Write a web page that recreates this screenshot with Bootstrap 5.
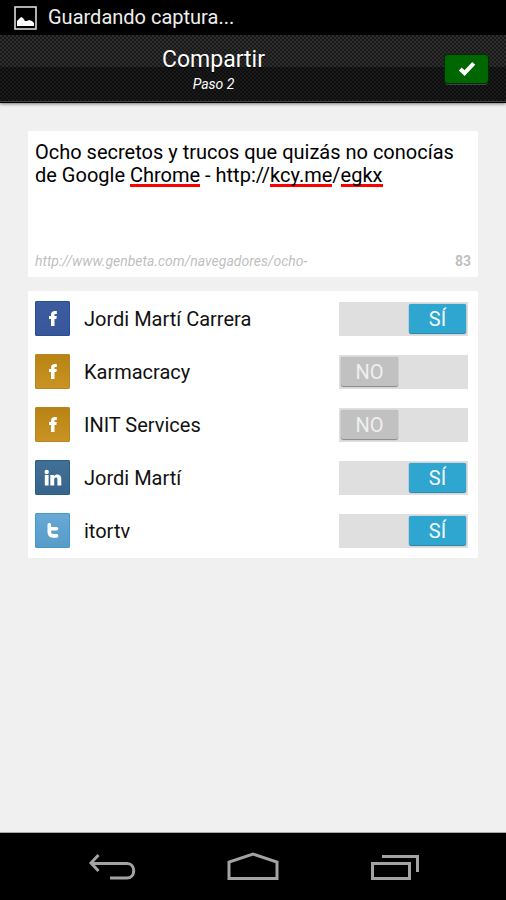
<!DOCTYPE html>
<html lang="es">
<head>
<meta charset="utf-8">
<meta name="viewport" content="width=device-width, initial-scale=1">
<title>Compartir</title>
<link href="https://cdn.jsdelivr.net/npm/bootstrap@5.3.0/dist/css/bootstrap.min.css" rel="stylesheet">
<style>
  body { font-family: Roboto, "Liberation Sans", sans-serif; font-size: 20px; line-height: 23px; background: #f0f0f0; color: #111; }
  .status { height: 35px; padding-left: 14px; gap: 11px; background: #000; color: #eee; }
  .topbar {
    height: 68px; padding: 0 18px; color: #fff; border-bottom: 1px solid #000;
    box-shadow: inset 0 -1px 0 #444, 0 1px 3px rgba(0,0,0,.5);
    background:
      conic-gradient(rgba(0,0,0,.45) 25%, transparent 0 50%, rgba(0,0,0,.45) 0 75%, transparent 0) 0 0 / 4px 4px,
      linear-gradient(#2d2d2d 32px, #1a1a1a 32px);
  }
  .heading { padding: 4px 36px 0 0; }
  .topbar h1 { font-size: 23px; line-height: 26px; text-shadow: 0 1px 1px #000; }
  .topbar p { font-size: 14px; line-height: 22px; font-style: italic; }
  .confirm { width: 43px; height: 28px; background: #060; border-radius: 3px; box-shadow: 0 0 0 1px #022c02, 0 2px 0 #444; }
  .confirm:hover { background: #070; }
  main { padding: 28px; gap: 14px; }
  .composer { padding: 10px 7px 3px; }
  /* The three gradients are the red underlines of the words that the spell checker flags. */
  .message {
    height: 106px; padding: 0; border: 0; resize: none; outline: 0; overflow: hidden; color: #000;
    background:
      linear-gradient(#f00, #f00) 95px 43px / 70px 3px no-repeat,
      linear-gradient(#f00, #f00) 235px 43px / 62px 3px no-repeat,
      linear-gradient(#f00, #f00) 306px 43px / 42px 3px no-repeat;
  }
  .source { padding-top: 2px; font-size: 14px; line-height: 25px; color: #bfbfbf; }
  .accounts { padding: 1px 10px 1px 7px; }
  .account { height: 53px; gap: 14px; }
  .account label { padding-top: 1px; }
  .tile { width: 35px; height: 35px; border-radius: 2px; }
  .facebook { background: linear-gradient(#3d5c9f, #38569a); box-shadow: inset 0 0 0 1px #244e96; }
  .page { background: linear-gradient(#b78312, #cb9425); box-shadow: inset 0 0 0 1px #b98520; }
  .linkedin { background: linear-gradient(#427097, #38648b); box-shadow: inset 0 0 0 1px #286187; }
  .twitter { background: linear-gradient(#68a9d5, #589bc9); box-shadow: inset 0 0 0 1px #4699cd; }
  .account .toggle { width: 129px; height: 34px; padding: 2px; background: #dfdfdf; cursor: pointer; }
  .thumb { width: 57px; height: 29px; border-radius: 2px; line-height: 30px; text-align: center; background: #c1c1c1; color: #efefef; box-shadow: 0 1px 1px #888, 0 0 1px #999; }
  .thumb .on, input:checked + .thumb .off { display: none; }
  input:checked + .thumb { margin-left: auto; background: #2ea6d0; color: #f4fbff; box-shadow: 0 1px 1px #2482a6, 0 0 1px #58a; }
  input:checked + .thumb .on { display: inline; }
  .toggle:focus-within { outline: 2px solid #2ea6d0; }
  .softkeys { height: 67px; padding: 0 41px; background: #000; box-shadow: 0 -1px 0 #aaa; }
  .softkeys svg { fill: none; stroke: #a3a3a3; stroke-width: 3; }
</style>
<script src="https://cdn.jsdelivr.net/npm/bootstrap@5.3.0/dist/js/bootstrap.bundle.min.js"></script>
</head>
<body class="d-flex flex-column min-vh-100">
  <div class="status d-flex align-items-center">
    <svg width="23" height="24" viewBox="0 0 23 24" aria-hidden="true"><rect x="1" y="1" width="21" height="22" fill="none" stroke="#ddd" stroke-width="1.6"/><path d="M3 20v-5l2-2 2-2 2 1 2 3h2l2-1 3 1 2 2v3z" fill="#fff"/></svg>
    <span>Guardando captura...</span>
  </div>
  <header class="topbar d-flex align-items-center">
    <div class="heading flex-grow-1 text-center">
      <h1 class="m-0 fw-normal">Compartir</h1>
      <p class="m-0">Paso 2</p>
    </div>
    <button type="button" class="confirm btn p-0 border-0 d-flex align-items-center justify-content-center" aria-label="Confirmar">
      <svg width="18" height="16" viewBox="0 0 16 14" aria-hidden="true"><path d="M2 7 5.800 10.600 14 2" fill="none" stroke="#fff" stroke-width="3.600"/></svg>
    </button>
  </header>

  <main class="flex-grow-1 d-flex flex-column">
    <section class="composer bg-white">
      <textarea class="message d-block w-100" aria-label="Mensaje" spellcheck="false">Ocho secretos y trucos que quizás no conocías de Google Chrome - http://kcy.me/egkx</textarea>
      <div class="source d-flex justify-content-between">
        <em>http://www.genbeta.com/navegadores/ocho-</em>
        <strong>83</strong>
      </div>
    </section>

    <ul class="accounts list-unstyled bg-white m-0">
      <li class="account d-flex align-items-center">
        <svg class="tile facebook" viewBox="0 0 35 35" aria-hidden="true"><path d="M16 25v-7h-2v-3h2v-1c0-3 1.500-4 4-4h1.800v3h-1.300c-1 0-1 .5-1 1.200v.8h2.300l-.4 3h-1.900v7z" fill="#fff"/></svg>
        <label for="a1" class="flex-grow-1">Jordi Martí Carrera</label>
        <label class="toggle d-flex"><input id="a1" class="visually-hidden" type="checkbox" role="switch" checked><span class="thumb"><span class="on">SÍ</span><span class="off">NO</span></span></label>
      </li>
      <li class="account d-flex align-items-center">
        <svg class="tile page" viewBox="0 0 35 35" aria-hidden="true"><path d="M16 25v-7h-2v-3h2v-1c0-3 1.500-4 4-4h1.800v3h-1.300c-1 0-1 .5-1 1.200v.8h2.300l-.4 3h-1.900v7z" fill="#fff"/></svg>
        <label for="a2" class="flex-grow-1">Karmacracy</label>
        <label class="toggle d-flex"><input id="a2" class="visually-hidden" type="checkbox" role="switch"><span class="thumb"><span class="on">SÍ</span><span class="off">NO</span></span></label>
      </li>
      <li class="account d-flex align-items-center">
        <svg class="tile page" viewBox="0 0 35 35" aria-hidden="true"><path d="M16 25v-7h-2v-3h2v-1c0-3 1.500-4 4-4h1.800v3h-1.300c-1 0-1 .5-1 1.200v.8h2.300l-.4 3h-1.900v7z" fill="#fff"/></svg>
        <label for="a3" class="flex-grow-1">INIT Services</label>
        <label class="toggle d-flex"><input id="a3" class="visually-hidden" type="checkbox" role="switch"><span class="thumb"><span class="on">SÍ</span><span class="off">NO</span></span></label>
      </li>
      <li class="account d-flex align-items-center">
        <svg class="tile linkedin" viewBox="0 0 35 35" aria-hidden="true"><path d="M9.800 15h3.800v10.500H9.800zM15.300 15H19v1.400c.8-1.200 1.800-1.800 3.300-1.800 2.700 0 4 1.600 4 4.300v6.600h-3.900v-6c0-1.300-.4-1.900-1.400-1.900-1.200 0-1.800.9-1.800 2.200v5.700h-3.900z" fill="#fff"/><circle cx="11.700" cy="12" r="2.200" fill="#fff"/></svg>
        <label for="a4" class="flex-grow-1">Jordi Martí</label>
        <label class="toggle d-flex"><input id="a4" class="visually-hidden" type="checkbox" role="switch" checked><span class="thumb"><span class="on">SÍ</span><span class="off">NO</span></span></label>
      </li>
      <li class="account d-flex align-items-center">
        <svg class="tile twitter" viewBox="0 0 35 35" aria-hidden="true"><path d="M14.300 11.800v7.200c0 2.500 1.200 3.900 3.700 3.900h3.600M14.300 15.800h7.200" fill="none" stroke="#fff" stroke-width="3.600" stroke-linecap="round"/></svg>
        <label for="a5" class="flex-grow-1">itortv</label>
        <label class="toggle d-flex"><input id="a5" class="visually-hidden" type="checkbox" role="switch" checked><span class="thumb"><span class="on">SÍ</span><span class="off">NO</span></span></label>
      </li>
    </ul>
  </main>

  <nav class="softkeys row g-0 align-items-center text-center" aria-label="Sistema">
    <div class="col"><button type="button" class="btn p-0 border-0" aria-label="Atrás"><svg width="48" height="30" viewBox="0 0 48 30"><path d="M10.500 3 3 11l7.500 8M3 11.500h36c9 0 9 14.500 0 14.500H22"/></svg></button></div>
    <div class="col"><button type="button" class="btn p-0 border-0" aria-label="Inicio"><svg width="54" height="30" viewBox="0 0 54 30"><path d="M3 26.500V10L27 2l24 8v16.500z"/></svg></button></div>
    <div class="col"><button type="button" class="btn p-0 border-0" aria-label="Recientes"><svg width="50" height="30" viewBox="0 0 50 30"><path d="M3.500 11.500h37v15h-37zM13 4.500h35.500V20"/></svg></button></div>
  </nav>
</body>
</html>
